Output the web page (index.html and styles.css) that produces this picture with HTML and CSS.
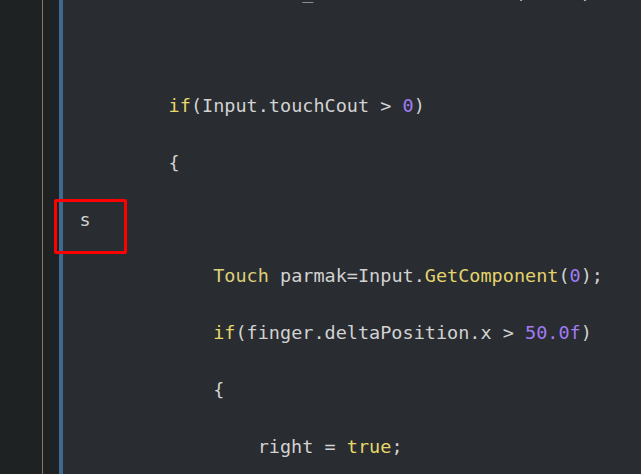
FILE: index.html
```html
<!DOCTYPE html>
<html lang="tr">

<head>
    <meta charset="UTF-8">
    <meta name="viewport" content="width=device-width, initial-scale=1.0">
    <title>Kod</title>
    <link rel="stylesheet" href="styles.css">
</head>

<body>
    <div class="editor">
        <div class="gutter">
            <div class="gutter-line"></div>
        </div>
        <div class="changebar"></div>

        <div class="code">
            <div class="line">        float screen_width = Screen.Max(a + b)</div>
            <div class="line"></div>
            <div class="line">        <span class="kw">if</span>(Input.touchCout &gt; <span class="num">0</span>)</div>
            <div class="line">        {</div>
            <div class="line">s</div>
            <div class="line">            <span class="type">Touch</span> parmak=Input.<span class="fn">GetComponent</span>(<span class="num">0</span>);</div>
            <div class="line">            <span class="kw">if</span>(finger.deltaPosition.x &gt; <span class="num">50.0f</span>)</div>
            <div class="line">            {</div>
            <div class="line">                right = <span class="kw">true</span>;</div>
        </div>
    </div>

    <div class="highlight"></div>
</body>

</html>
```

FILE: styles.css
```css
body {
    margin: 0;
    background-color: #292c30;
    overflow: hidden;
}

.editor {
    display: flex;
    height: 474px;
}

.gutter {
    width: 59px;
    background-color: #1f2223;
}

.gutter-line {
    width: 42px;
    height: 100%;
    border-right: 1px solid #857868;
}

.changebar {
    width: 4px;
    background-color: #3d6a8e;
}

.code {
    flex: 1;
    padding-left: 16.5px;
    margin-top: -35.5px;
    font-family: "DejaVu Sans Mono", "Liberation Mono", monospace;
    font-size: 18.5px;
    color: #d2d2d2;
}

.line {
    height: 56.8px;
    line-height: 56.8px;
    white-space: pre;
}

.kw {
    color: #e6d86a;
}

.type {
    color: #dcd07a;
}

.fn {
    color: #e2d36c;
}

.num {
    color: #a07cf4;
}

.highlight {
    position: absolute;
    left: 54px;
    top: 199px;
    width: 67px;
    height: 49px;
    border: 3px solid #ff0000;
    border-radius: 2px;
}
```
